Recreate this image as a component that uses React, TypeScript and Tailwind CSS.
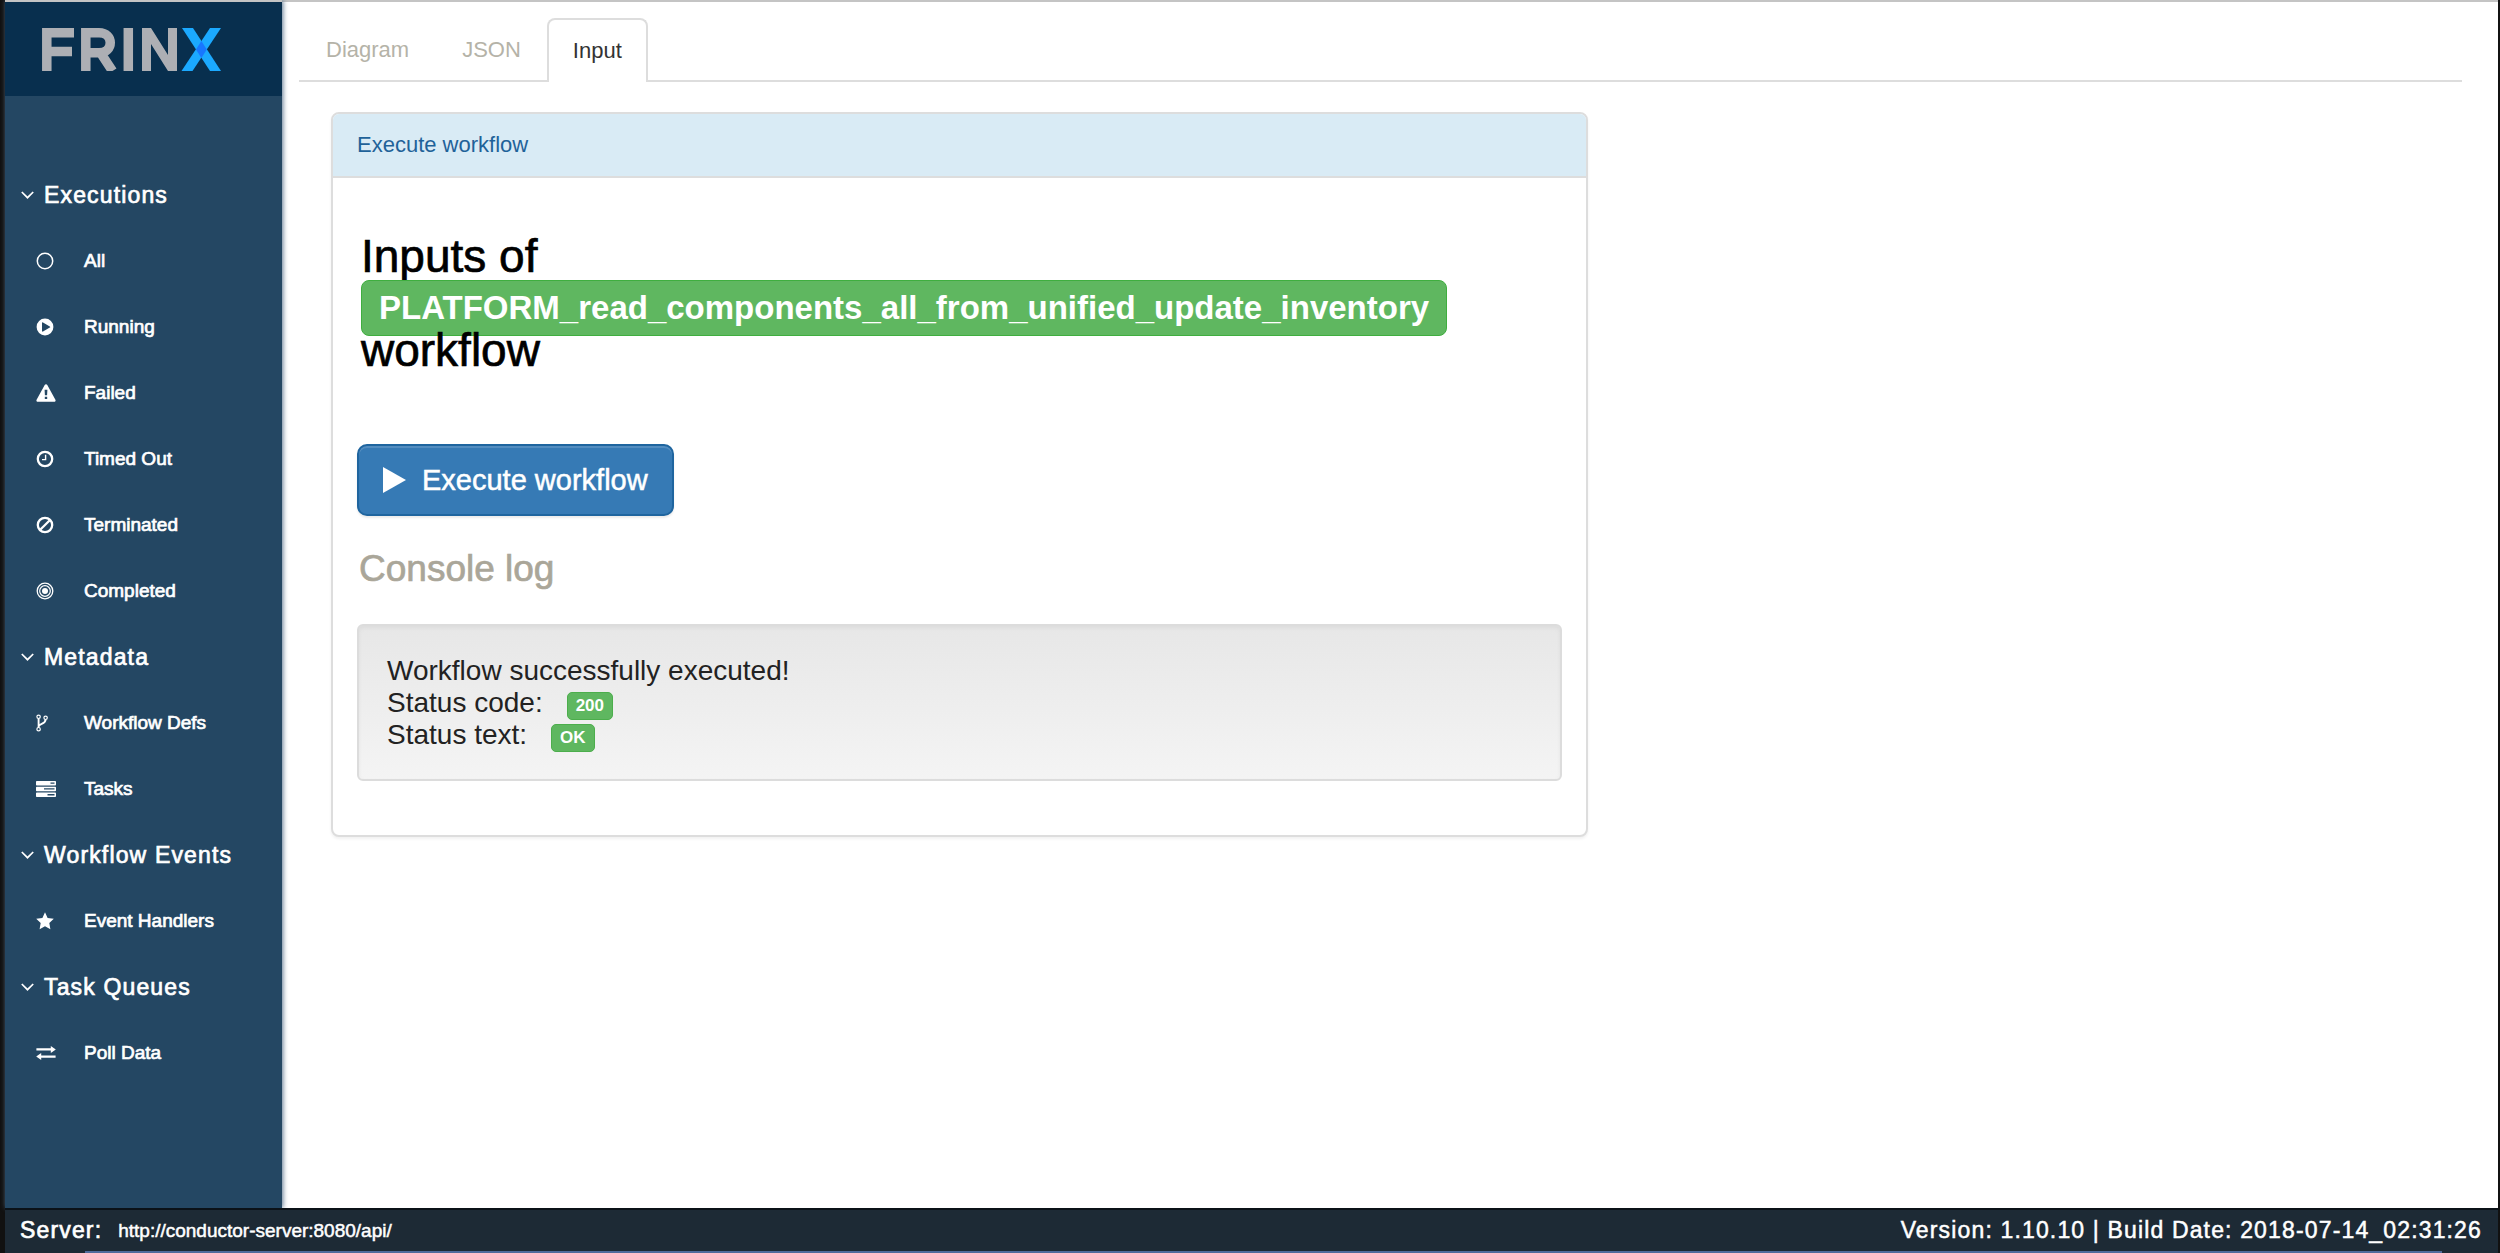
import type { ReactNode } from "react";

type IconProps = { w?: number; children: ReactNode };

function Glyph({ w = 18, children }: IconProps) {
  return (
    <svg width={w} height={18} viewBox={`0 0 ${w} 18`} fill="currentColor" aria-hidden="true">
      {children}
    </svg>
  );
}

const icons = {
  all: (
    <Glyph>
      <circle cx="9" cy="9" r="7.7" fill="none" stroke="currentColor" strokeWidth="1.5" />
    </Glyph>
  ),
  running: (
    <Glyph>
      <path
        fillRule="evenodd"
        d="M9 .6a8.4 8.4 0 1 1 0 16.8A8.4 8.4 0 0 1 9 .6ZM6 5v8c0 .5.5.9 1 .6l6.8-4c.5-.3.5-.9 0-1.2L7 4.4C6.500 4.100 6 4.500 6 5Z"
      />
    </Glyph>
  ),
  failed: (
    <Glyph w={20}>
      <path
        fillRule="evenodd"
        d="M11.300.9 19.400 15.800c.5 1-.1 2-1.200 2H1.800c-1.100 0-1.700-1-1.200-2L8.700.9c.6-1 2-1 2.600 0ZM8.600 5.800l.3 5.400h2.200l.3-5.400H8.600ZM8.800 12.700v2.400h2.400v-2.400H8.800Z"
      />
    </Glyph>
  ),
  timedOut: (
    <Glyph>
      <circle cx="9" cy="9" r="7.200" fill="none" stroke="currentColor" strokeWidth="2.300" />
      <path d="M8.900 4.700h1.400v5.500H6V8.900h2.900Z" />
    </Glyph>
  ),
  terminated: (
    <Glyph>
      <circle cx="9" cy="9" r="7.200" fill="none" stroke="currentColor" strokeWidth="2.300" />
      <path d="M13.800 4.200 4.200 13.800" stroke="currentColor" strokeWidth="2.300" />
    </Glyph>
  ),
  completed: (
    <Glyph>
      <circle cx="9" cy="9" r="7.800" fill="none" stroke="currentColor" strokeWidth="1.300" />
      <circle cx="9" cy="9" r="5.300" fill="none" stroke="currentColor" strokeWidth="1.200" />
      <circle cx="9" cy="9" r="3" />
    </Glyph>
  ),
  defs: (
    <Glyph w={12}>
      <g fill="none" stroke="currentColor" strokeWidth="1.200">
        <circle cx="2.600" cy="2.800" r="1.700" />
        <circle cx="2.600" cy="15.200" r="1.700" />
        <circle cx="9.600" cy="3.800" r="1.700" />
      </g>
      <path
        d="M2.600 4.500v9M9.600 5.500c0 5-6.600 3.600-6.900 7"
        fill="none"
        stroke="currentColor"
        strokeWidth="1.900"
      />
    </Glyph>
  ),
  tasks: (
    <Glyph w={20}>
      <path
        fillRule="evenodd"
        d="M1 1h18c.6 0 1 .4 1 1v2.400c0 .6-.4 1-1 1H1c-.6 0-1-.4-1-1V2c0-.6.400-1 1-1Zm13.500 1.500v1.300h4V2.500h-4ZM1 6.800h18c.6 0 1 .4 1 1v2.400c0 .6-.4 1-1 1H1c-.6 0-1-.4-1-1V7.800c0-.6.400-1 1-1Zm7 1.500v1.300h10.500V8.300H8ZM1 12.600h18c.6 0 1 .4 1 1V16c0 .6-.4 1-1 1H1c-.6 0-1-.4-1-1v-2.400c0-.6.400-1 1-1Zm10.500 1.500v1.300h7v-1.300h-7Z"
      />
    </Glyph>
  ),
  events: (
    <Glyph>
      <path d="M9 .2 11.600 5.900l6.200.8-4.500 4.300 1.100 6.200L9 14.200l-5.400 3 1.100-6.200L.2 6.700l6.200-.8Z" />
    </Glyph>
  ),
  poll: (
    <Glyph w={20}>
      <path d="M.4 4.200h14.400V2l5 3.400-5 3.500V6.600H.4ZM19.600 13.800H5.200V16l-5-3.400 5-3.500v2.300h14.400Z" />
    </Glyph>
  ),
};

type Entry = { label: string; icon: ReactNode };

const groups: { title: string; entries: Entry[] }[] = [
  {
    title: "Executions",
    entries: [
      { label: "All", icon: icons.all },
      { label: "Running", icon: icons.running },
      { label: "Failed", icon: icons.failed },
      { label: "Timed Out", icon: icons.timedOut },
      { label: "Terminated", icon: icons.terminated },
      { label: "Completed", icon: icons.completed },
    ],
  },
  {
    title: "Metadata",
    entries: [
      { label: "Workflow Defs", icon: icons.defs },
      { label: "Tasks", icon: icons.tasks },
    ],
  },
  { title: "Workflow Events", entries: [{ label: "Event Handlers", icon: icons.events }] },
  { title: "Task Queues", entries: [{ label: "Poll Data", icon: icons.poll }] },
];

function Logo() {
  return (
    <svg width="180" height="43" viewBox="0 0 180 43" role="img" aria-label="FRINX">
      <g fill="none" stroke="#adafb4" strokeWidth="9.500">
        <path d="M5.800 43V4.800H33M5.800 23.500H31" />
        <path d="M44.800 43V4.800H58c15 0 15 20 0 20H45M59 24l12.500 19" />
        <path d="M87.300 0v43" />
      </g>
      <path d="M101 43V0h9l17 27V0h9v43h-9l-17-27v27Z" fill="#adafb4" />
      <path d="M141 0h11l28 43h-11Z" fill="#1ba9ff" />
      <path d="M180 0h-11l-28.500 43h11Z" fill="#1ba9ff" />
      <path d="M160.400 13l5.400 8.500-5.400 8.500-5.400-8.500Z" fill="#1877ff" />
    </svg>
  );
}

function Sidebar() {
  return (
    <aside className="z-10 flex w-[277px] shrink-0 flex-col bg-[#244763] text-white shadow-[1px_0_5px_#5b7590]">
      <a href="#home" className="flex h-24 shrink-0 items-center border-t-2 border-[#c4c4c4] bg-[#082f4e] pl-9">
        <Logo />
      </a>
      <nav className="pt-[66px]">
        {groups.map((group) => (
          <section key={group.title}>
            <button type="button" className="flex h-[66px] w-full items-center gap-[10px] pl-4 text-left">
              <svg width="13" height="8" viewBox="0 0 13 8" fill="none" stroke="currentColor" strokeWidth="1.700" aria-hidden="true">
                <path d="m.8 1 5.700 5.700L12.200 1" />
              </svg>
              <span className="text-[23px] leading-8 tracking-wider [-webkit-text-stroke:0.7px]">{group.title}</span>
            </button>
            <ul>
              {group.entries.map((entry) => (
                <li key={entry.label}>
                  <a href="#nav" className="flex h-[66px] items-center pl-[31px]">
                    <span className="w-12">{entry.icon}</span>
                    <span className="text-[19px] leading-6 [-webkit-text-stroke:0.7px]">{entry.label}</span>
                  </a>
                </li>
              ))}
            </ul>
          </section>
        ))}
      </nav>
    </aside>
  );
}

function Tabs() {
  return (
    <div role="tablist" className="flex h-16 border-b-2 border-[#dddddd] text-[22px] leading-8 text-[#b5b3a8]">
      <button type="button" role="tab" aria-selected="false" className="px-[27px] pt-[2px]">
        Diagram
      </button>
      <button type="button" role="tab" aria-selected="false" className="px-[26px] pt-[2px]">
        JSON
      </button>
      <button
        type="button"
        role="tab"
        aria-selected="true"
        className="-mb-[2px] rounded-t-lg border-2 border-b-0 border-[#dddddd] bg-white px-6 text-[#333333]"
      >
        Input
      </button>
    </div>
  );
}

function Status({ label, value }: { label: string; value: string }) {
  return (
    <p className="flex h-8 items-center gap-6">
      {label}
      <span className="mt-[6px] rounded-[5px] border border-[#4cae4c] bg-[#5fb760] px-2 text-[17px] leading-[26px] font-bold text-white">
        {value}
      </span>
    </p>
  );
}

function WorkflowPanel() {
  return (
    <section className="w-[59%] rounded-lg border-2 border-[#dddddd] bg-white shadow-[0_2px_3px_rgba(0,0,0,0.06)]">
      <h2 className="rounded-t-md border-b-2 border-[#dddddd] bg-[#d9ebf5] px-6 py-[15px] text-[22px] leading-8 text-[#1f6299]">
        Execute workflow
      </h2>
      <div className="px-6 pt-[55px] pb-[54px]">
        <h1 className="px-1 text-[46px] leading-[47px] text-black [-webkit-text-stroke:0.7px]">
          <span className="block">Inputs of</span>
          <span className="relative flex h-[47px] items-center pt-2">
            <span className="rounded-lg border border-[#3fae3f] bg-[#5fb760] px-[17px] text-[33px] leading-[54px] font-bold text-white [-webkit-text-stroke:0px]">
              PLATFORM_read_components_all_from_unified_update_inventory
            </span>
          </span>
          <span className="relative block">workflow</span>
        </h1>
        <button
          type="button"
          className="mt-[70px] flex h-[72px] items-center gap-4 rounded-[10px] border-2 border-[#1f659f] bg-[#367ab5] px-6 text-[29px] leading-10 text-white shadow-[inset_0_2px_0_rgba(255,255,255,0.15),0_2px_2px_rgba(0,0,0,0.08)] [-webkit-text-stroke:0.5px]"
        >
          <svg width="23" height="26" viewBox="0 0 23 26" fill="currentColor" aria-hidden="true">
            <path d="M0 0l23 13L0 26Z" />
          </svg>
          Execute workflow
        </button>
        <h3 className="mt-[29px] px-[2px] text-[37px] leading-[48px] text-[#aaa699] [-webkit-text-stroke:0.7px]">
          Console log
        </h3>
        <div className="mt-[31px] rounded-md border-2 border-[#dcdcdc] bg-linear-to-b from-[#e7e7e7] to-[#f4f4f4] px-7 pt-[29px] pb-7 text-[28px] leading-8 text-[#222222] shadow-[inset_0_2px_4px_rgba(0,0,0,0.05)]">
          <p>Workflow successfully executed!</p>
          <Status label="Status code:" value="200" />
          <Status label="Status text:" value="OK" />
        </div>
      </div>
    </section>
  );
}

export default function App() {
  return (
    <div className="flex min-h-screen flex-col border-r-2 border-l-[5px] border-[#111111] bg-white font-['Liberation_Sans',Arial,sans-serif]">
      <div className="flex grow">
        <Sidebar />
        <main className="grow border-t-2 border-[#c4c4c4] pt-4 pr-9 pl-[17px]">
          <Tabs />
          <div className="pt-[30px] pl-8">
            <WorkflowPanel />
          </div>
        </main>
      </div>
      <footer className="z-20 border-t-2 border-[#0b1218] bg-[#1d2a35] text-[23px] leading-[41px] text-white">
        <div className="flex items-center justify-between pr-4 pl-[15px]">
          <p className="flex items-center gap-4">
            <span className="tracking-wider [-webkit-text-stroke:0.7px]">Server:</span>
            <a href="#api" className="text-[19px] [-webkit-text-stroke:0.5px]">
              http://conductor-server:8080/api/
            </a>
          </p>
          <p className="tracking-wider [-webkit-text-stroke:0.5px]">
            Version: 1.10.10 | Build Date: 2018-07-14_02:31:26
          </p>
        </div>
        <div className="mr-14 ml-20 h-[2px] bg-[#4f6b9c]" />
      </footer>
    </div>
  );
}
